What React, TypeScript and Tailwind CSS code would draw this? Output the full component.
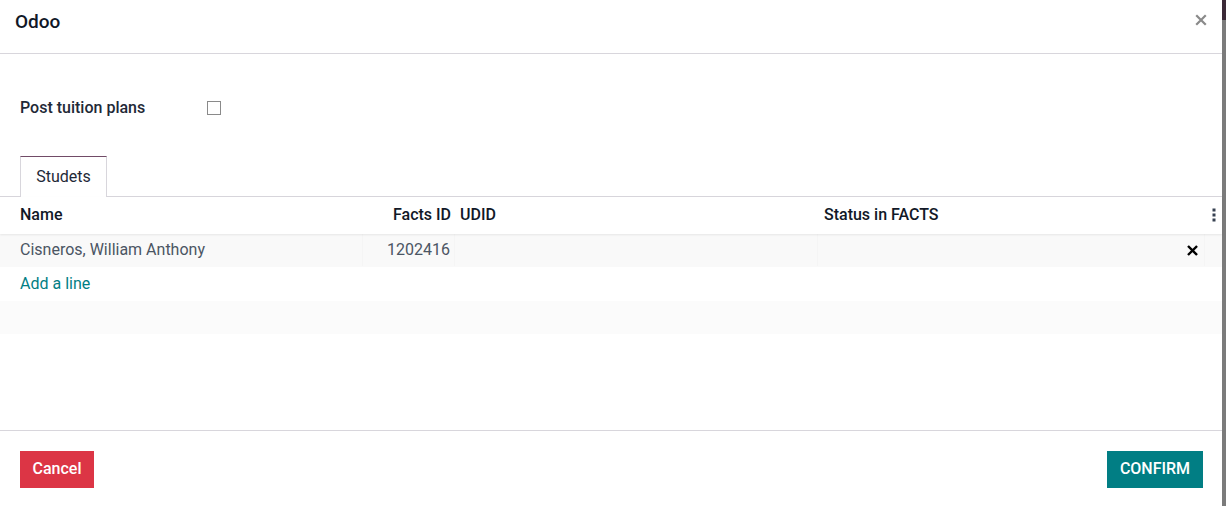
import React from 'react'

const COLS = 'grid grid-cols-[363px_92px_363px_1fr_17px]'

function Kebab() {
  return (
    <svg width="4" height="14" viewBox="0 0 4 14" className="block">
      <rect x="0.5" y="0.5" width="3" height="3" fill="#374151" />
      <rect x="0.5" y="5.5" width="3" height="3" fill="#374151" />
      <rect x="0.5" y="10.5" width="3" height="3" fill="#374151" />
    </svg>
  )
}

function Cross({ size, color, width }: { size: number; color: string; width: number }) {
  return (
    <svg width={size} height={size} viewBox="0 0 12 12" className="block">
      <path d="M2 2 L10 10 M10 2 L2 10" stroke={color} strokeWidth={width} strokeLinecap="square" />
    </svg>
  )
}

export default function App() {
  return (
    <div className="flex h-[506px] w-[1226px] overflow-hidden bg-white font-['Roboto',_'Liberation_Sans',_sans-serif]">
      <div className="flex w-[1222px] flex-col">
        {/* header */}
        <div className="flex h-[54px] items-center justify-between border-b border-[#d8d6dc] pl-[15px] pr-[15px] pb-[9px]">
          <h4 className="text-[19px] font-medium text-[#111827]">Odoo</h4>
          <button className="mt-[-5px]">
            <Cross size={12} color="#8a8a8a" width={2.2} />
          </button>
        </div>

        {/* body */}
        <div className="flex h-[376px] flex-col">
          <div className="flex h-[68px] items-end pl-[20px]">
            <div className="flex items-center pb-[2px]">
              <span className="w-[187px] text-[16px] font-medium text-[#1f2937]">Post tuition plans</span>
              <span className="block h-[14px] w-[14px] border border-[#8a8a8a] bg-white" />
            </div>
          </div>

          {/* tabs */}
          <div className="mt-[34px] flex h-[41px] border-b border-[#d8d6dc] pl-[20px]">
            <div className="mb-[-1px] flex w-[87px] items-center justify-center border-x border-t border-[#d8d6dc] border-t-[#714b67] bg-white text-[16px] text-[#1f2937]">
              Studets
            </div>
          </div>

          {/* list */}
          <div className={`${COLS} relative z-10 h-[37px] items-center pb-[1px] text-[16px] font-medium text-[#111827] shadow-[0_1px_2px_rgba(0,0,0,0.08)]`}>
            <div className="pl-[20px]">Name</div>
            <div className="pr-[4px] text-right">Facts ID</div>
            <div className="pl-[5px]">UDID</div>
            <div className="pl-[6px]">Status in FACTS</div>
            <div className="flex justify-center pl-[1px]">
              <Kebab />
            </div>
          </div>
          <div className={`${COLS} h-[33px] items-stretch bg-[#f9f9f9] pb-[1px] text-[16px] text-[#4b5563]`}>
            <div className="flex items-center border-r border-[#f5f5f5] pl-[20px]">Cisneros, William Anthony</div>
            <div className="flex items-center justify-end border-r border-[#f5f5f5] pr-[4px]">1202416</div>
            <div className="border-r border-[#f5f5f5]" />
            <div className="flex items-center justify-end border-r border-[#f5f5f5] pr-[6px]">
              <Cross size={11} color="#000" width={2.6} />
            </div>
            <div />
          </div>
          <div className="flex h-[34px] items-center pl-[20px] text-[16px] text-[#017e84]">Add a line</div>
          <div className="h-[33px] bg-[#fbfbfb]" />
        </div>

        {/* footer */}
        <div className="flex flex-1 items-start justify-between border-t border-[#d8d6dc] pl-[20px] pr-[19px] pt-[20px]">
          <button className="h-[37px] w-[74px] bg-[#dc3545] pb-[1px] text-[16px] font-medium text-white">Cancel</button>
          <button className="h-[37px] w-[96px] bg-[#017e84] pb-[1px] text-[16px] font-medium text-white">CONFIRM</button>
        </div>
      </div>
      <div className="flex w-[4px] flex-col bg-[#7b7b7b]">
        <div className="h-[20px] bg-[#3b2a37]" />
      </div>
    </div>
  )
}
